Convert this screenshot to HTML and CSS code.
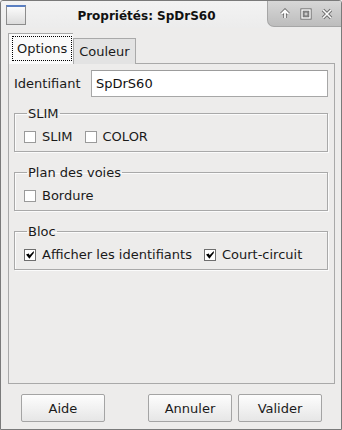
FILE: index.html
```html
<!DOCTYPE html>
<html lang="fr">
<head>
    <meta charset="UTF-8">
    <title>Propriétés: SpDrS60</title>
    <link rel="stylesheet" href="styles.css">
</head>
<body>
    <div class="window">
        <div class="titlebar">
            <span class="win-icon"></span>
            <span class="title">Propriétés: SpDrS60</span>
            <div class="win-buttons">
                <svg width="12" height="12" viewBox="0 0 12 12">
                    <path d="M6 10 V3 M2.5 6 L6 2.5 L9.5 6" fill="none" stroke="#6e6e6e" stroke-width="3.6"/>
                    <path d="M6 10 V3 M2.5 6 L6 2.5 L9.5 6" fill="none" stroke="#fbfbfb" stroke-width="1.8"/>
                </svg>
                <svg width="12" height="12" viewBox="0 0 12 12">
                    <rect x="2" y="2" width="8" height="8" fill="none" stroke="#6e6e6e" stroke-width="3.2"/>
                    <rect x="2" y="2" width="8" height="8" fill="none" stroke="#fbfbfb" stroke-width="1.4"/>
                    <rect x="4" y="4" width="4" height="4" fill="none" stroke="#6e6e6e" stroke-width="1"/>
                </svg>
                <svg width="12" height="12" viewBox="0 0 12 12">
                    <path d="M2 2 L10 10 M10 2 L2 10" fill="none" stroke="#6e6e6e" stroke-width="3.4"/>
                    <path d="M2 2 L10 10 M10 2 L2 10" fill="none" stroke="#fbfbfb" stroke-width="1.6"/>
                </svg>
            </div>
        </div>

        <div class="content">
            <div class="tabs">
                <div class="tab active"><span class="focus">Options</span></div>
                <div class="tab">Couleur</div>
            </div>

            <div class="panel">
                <div class="field-row">
                    <label for="ident">Identifiant</label>
                    <input type="text" id="ident" value="SpDrS60">
                </div>

                <fieldset class="group">
                    <legend>SLIM</legend>
                    <label class="check"><span class="box"></span>SLIM</label>
                    <label class="check"><span class="box"></span>COLOR</label>
                </fieldset>

                <fieldset class="group">
                    <legend>Plan des voies</legend>
                    <label class="check"><span class="box"></span>Bordure</label>
                </fieldset>

                <fieldset class="group">
                    <legend>Bloc</legend>
                    <label class="check"><span class="box checked"><svg width="10" height="10" viewBox="0 0 10 10"><path d="M1 4.6 L3.8 3.6 L4.6 5.2 L8.8 1 L8.8 3 L4.4 8.8 Z" fill="#000"/></svg></span>Afficher les identifiants</label>
                    <label class="check"><span class="box checked"><svg width="10" height="10" viewBox="0 0 10 10"><path d="M1 4.6 L3.8 3.6 L4.6 5.2 L8.8 1 L8.8 3 L4.4 8.8 Z" fill="#000"/></svg></span>Court-circuit</label>
                </fieldset>
            </div>

            <div class="actions">
                <button type="button">Aide</button>
                <button type="button" class="push">Annuler</button>
                <button type="button">Valider</button>
            </div>
        </div>
    </div>
</body>
</html>
```

FILE: styles.css
```css
body {
    margin: 0;
    padding: 0;
    font-family: "DejaVu Sans", sans-serif;
    font-size: 13px;
    color: #1a1a1a;
    background-color: #edeceb;
}

.window {
    width: 342px;
    height: 430px;
    box-sizing: border-box;
    border: 1px solid #7a7a7a;
    border-radius: 3px 3px 0 0;
    background-color: #edeceb;
    display: flex;
    flex-direction: column;
    overflow: hidden;
}

/* title bar */
.titlebar {
    height: 27px;
    display: flex;
    align-items: flex-start;
    background: linear-gradient(#f3f3f3, #ececec);
}

.win-icon {
    width: 18px;
    height: 17px;
    margin: 4px 0 0 5px;
    border: 1px solid #8c8c8c;
    border-top: 2px solid #5a7fc2;
    background: linear-gradient(#fbfbfb, #dcdcdc);
    box-sizing: content-box;
}

.title {
    flex: 1;
    text-align: center;
    font-weight: bold;
    font-size: 12px;
    line-height: 14px;
    margin-top: 8px;
    color: #111;
}

.win-buttons {
    width: 74px;
    height: 26px;
    display: flex;
    align-items: center;
    justify-content: space-around;
    padding: 0 4px 0 6px;
    box-sizing: border-box;
    background: linear-gradient(#d7d7d7, #bdbdbd);
    border-left: 1px solid #a6a6a6;
    border-bottom: 1px solid #a6a6a6;
    border-bottom-left-radius: 7px;
}

/* tabs */
.content {
    flex: 1;
    display: flex;
    flex-direction: column;
    padding: 5px 6px 7px 7px;
}

.tabs {
    display: flex;
    align-items: flex-end;
    margin-bottom: -1px;
    position: relative;
    z-index: 1;
}

.tab {
    height: 25px;
    line-height: 25px;
    padding: 0 5px;
    border: 1px solid #a9a9a9;
    border-bottom: none;
    background-color: #e3e3e3;
    color: #1a1a1a;
}

.tab.active {
    height: 30px;
    line-height: 24px;
    padding: 0 1px 0 3px;
    background-color: #fafafa;
    border-right: none;
}

.focus {
    display: inline-block;
    padding: 0 4px;
    border: 1px dotted #000;
    line-height: 23px;
    margin-top: 2px;
}

/* panel */
.panel {
    flex: 1;
    border: 1px solid #a9a9a9;
    padding: 6px 6px 0 5px;
}

.field-row {
    display: flex;
    align-items: center;
}

.field-row label {
    width: 77px;
}

.field-row input {
    flex: 1;
    height: 27px;
    box-sizing: border-box;
    border: 1px solid #a7a7a7;
    border-top-color: #9c9c9c;
    padding: 0 4px;
    font-family: "DejaVu Sans", sans-serif;
    font-size: 13px;
    color: #111;
    background-color: #fff;
    outline: none;
}

.group {
    margin: 9px 0 0 0;
    padding: 8px 9px 6px 9px;
    border: 1px solid #a9a9a9;
    box-shadow: inset 1px 1px 0 #fbfbfb, 1px 1px 0 #fbfbfb;
    display: flex;
    gap: 12px;
}

.group + .group {
    margin-top: 13px;
}

.group legend {
    padding: 0 1px;
    margin-left: 3px;
    line-height: 15px;
}

.check {
    display: flex;
    align-items: center;
    line-height: 16px;
}

.box {
    width: 10px;
    height: 10px;
    border: 1px solid #9a9a9a;
    background-color: #fff;
    margin-right: 6px;
    display: inline-flex;
    align-items: center;
    justify-content: center;
}

.box.checked {
    border-color: #6e6e6e;
}

/* buttons */
.actions {
    display: flex;
    gap: 6px;
    padding: 0 13px 0 13px;
    margin-top: 10px;
}

button {
    width: 84px;
    height: 28px;
    font-family: "DejaVu Sans", sans-serif;
    font-size: 13px;
    color: #1a1a1a;
    border: 1px solid #a4a4a4;
    border-radius: 2px;
    background: linear-gradient(#fdfdfd, #e6e6e6);
    padding: 0;
}

button.push {
    margin-left: auto;
}
```
